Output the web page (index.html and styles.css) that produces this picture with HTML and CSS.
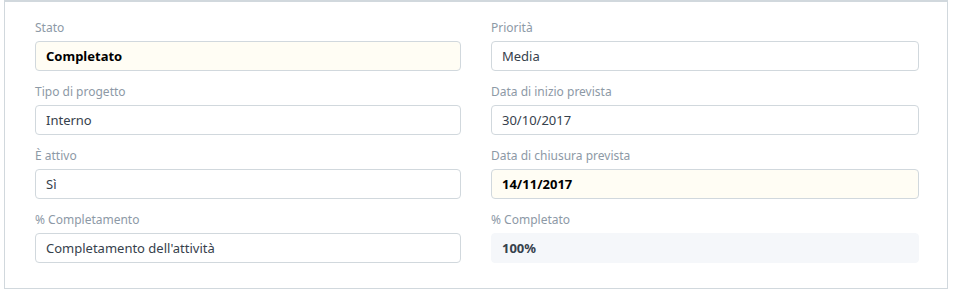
FILE: index.html
```html
<!DOCTYPE html>
<html lang="it">
  <head>
        <meta charset="UTF-8">
        <meta name="viewport" content="width=device-width, initial-scale=1.0">
        <title>Progetto</title>
        <link rel="stylesheet" href="styles.css">
  </head>
  <body>
        <div class="form-section">
            <div class="form-column">
                <div class="form-group">
                    <label class="control-label">Stato</label>
                    <div class="control-value bold">Completato</div>
                </div>
                <div class="form-group">
                    <label class="control-label">Tipo di progetto</label>
                    <div class="control-value">Interno</div>
                </div>
                <div class="form-group">
                    <label class="control-label">È attivo</label>
                    <div class="control-value">Sì</div>
                </div>
                <div class="form-group">
                    <label class="control-label">% Completamento</label>
                    <div class="control-value">Completamento dell'attività</div>
                </div>
            </div>

            <div class="form-column">
                <div class="form-group">
                    <label class="control-label">Priorità</label>
                    <div class="control-value">Media</div>
                </div>
                <div class="form-group">
                    <label class="control-label">Data di inizio prevista</label>
                    <div class="control-value">30/10/2017</div>
                </div>
                <div class="form-group">
                    <label class="control-label">Data di chiusura prevista</label>
                    <div class="control-value bold">14/11/2017</div>
                </div>
                <div class="form-group">
                    <label class="control-label">% Completato</label>
                    <div class="control-value static">100%</div>
                </div>
            </div>
        </div>
  </body>
</html>
```

FILE: styles.css
```css
* {
    margin: 0;
    padding: 0;
    box-sizing: border-box;
}

body {
    font-family: 'Noto Sans', 'Open Sans', sans-serif;
    background: #fff;
    color: #36414c;
}

.form-section {
    width: 944px;
    margin-left: 4px;
    border: 1px solid #d1d8dd;
    border-top: 2px solid #d1d8dd;
    padding: 17px 28px 25px 30px;
    display: grid;
    grid-template-columns: 426px 428px;
    column-gap: 30px;
}

.form-column {
    display: flex;
    flex-direction: column;
    gap: 12px;
}

.control-label {
    display: block;
    font-size: 12px;
    line-height: 18px;
    color: #8d99a6;
    margin-bottom: 4px;
}

.control-value {
    height: 30px;
    line-height: 28px;
    padding: 0 10px;
    font-size: 13px;
    color: #36414c;
    background: #fff;
    border: 1px solid #d1d8dd;
    border-radius: 4px;
    white-space: nowrap;
    overflow: hidden;
}

.control-value.bold {
    background: #fffdf4;
    color: #000;
    font-weight: bold;
}

.control-value.static {
    background: #f5f7fa;
    border-color: #f5f7fa;
    font-weight: bold;
}
```
